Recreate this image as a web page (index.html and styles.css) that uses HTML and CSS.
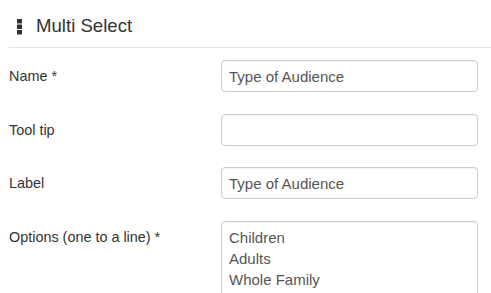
FILE: index.html
```html
<!DOCTYPE html>
<html lang="en">
<head>
  <meta charset="UTF-8" />
  <meta name="viewport" content="width=device-width, initial-scale=1" />
  <title>Multi Select</title>
  <link rel="stylesheet" href="styles.css">
</head>
<body>

<div class="panel">
  <div class="panel-heading">
    <svg class="handle" width="5" height="16" viewBox="0 0 5 16" aria-hidden="true">
      <rect x="0" y="0" width="5" height="4.5" />
      <rect x="0" y="5.5" width="5" height="4.5" />
      <rect x="0" y="11" width="5" height="4.5" />
    </svg>
    <span class="panel-title">Multi Select</span>
  </div>

  <form class="form-horizontal">
    <div class="form-row">
      <label for="name">Name *</label>
      <input type="text" id="name" class="form-control" value="Type of Audience" />
    </div>
    <div class="form-row">
      <label for="tooltip">Tool tip</label>
      <input type="text" id="tooltip" class="form-control" value="" />
    </div>
    <div class="form-row">
      <label for="label">Label</label>
      <input type="text" id="label" class="form-control" value="Type of Audience" />
    </div>
    <div class="form-row">
      <label for="options">Options (one to a line) *</label>
      <textarea id="options" class="form-control" rows="4">Children
Adults
Whole Family</textarea>
    </div>
  </form>
</div>

</body>
</html>
```

FILE: styles.css
```css
body {
  margin: 0;
  background-color: #fff;
  color: #333;
  font-family: "Liberation Sans", Arial, sans-serif;
  font-size: 14.4px;
  overflow: hidden;
}

.panel {
  padding-left: 9px;
}

/* Heading with drag handle */
.panel-heading {
  display: flex;
  align-items: center;
  gap: 14px;
  height: 48px;
  box-sizing: border-box;
  padding: 5px 0 0 8px;
  border-bottom: 1px solid #e5e5e5;
}

.handle {
  fill: #333;
  margin-top: 1px;
}

.panel-title {
  font-size: 18.6px;
  color: #333;
}

/* Form rows */
.form-horizontal {
  display: flex;
  flex-direction: column;
  gap: 21.7px;
  padding-top: 12px;
  padding-right: 13px;
}

.form-row {
  display: grid;
  grid-template-columns: 212px 1fr;
  align-items: start;
}

.form-row label {
  padding-top: 8px;
  line-height: 17px;
}

.form-control {
  box-sizing: border-box;
  width: 100%;
  height: 32px;
  padding: 6px 7px;
  border: 1px solid #ccc;
  border-radius: 4px;
  font-family: inherit;
  font-size: 15px;
  color: #555;
  background-color: #fff;
  box-shadow: inset 0 1px 1px rgba(0,0,0,0.05);
}

textarea.form-control {
  height: 96px;
  line-height: 21px;
  padding-top: 5px;
  resize: none;
}
```
